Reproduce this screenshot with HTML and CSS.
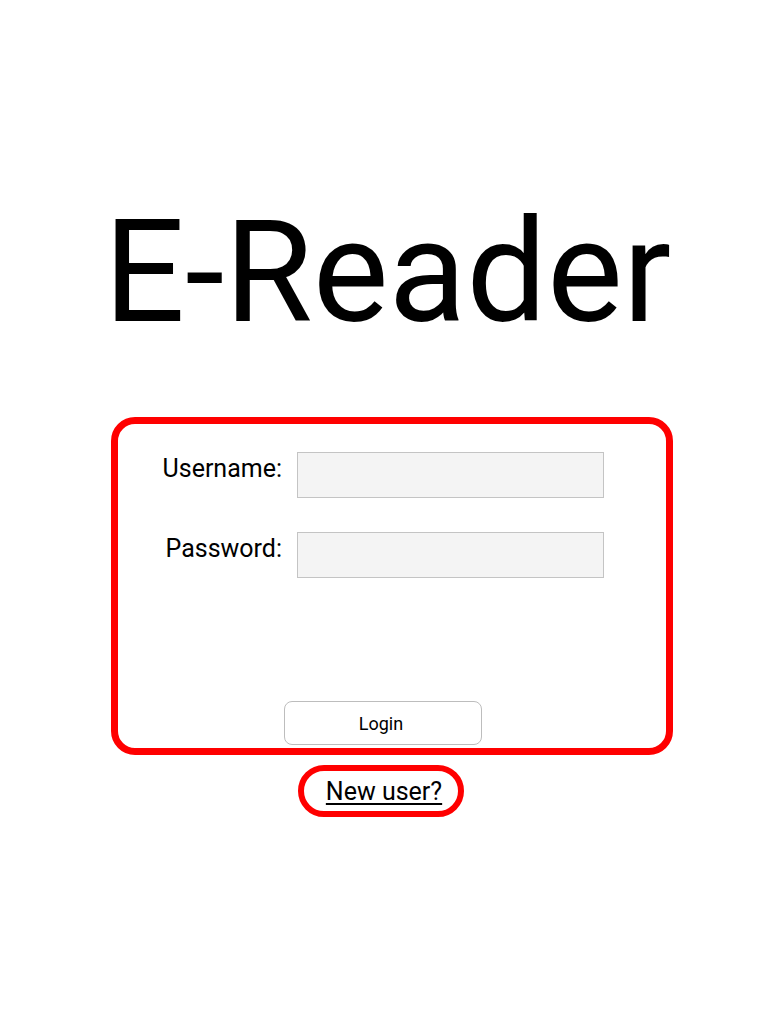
FILE: index.html
```html
<!DOCTYPE html>
<html>
<head>
<meta charset="utf-8">
<link rel="stylesheet" href="styles.css">
</head>
<body>
<main class="page">
  <h1 class="title">E-Reader</h1>
  <form class="login-box">
    <div class="row">
      <label class="label" for="u">Username:</label>
      <input class="field" id="u" type="text">
    </div>
    <div class="row">
      <label class="label" for="p">Password:</label>
      <input class="field" id="p" type="password">
    </div>
    <div class="actions">
      <button class="btn" type="button">Login</button>
    </div>
  </form>
  <div class="new-user-wrap">
    <a class="new-user" href="#">New user?</a>
  </div>
</main>
</body>
</html>
```
FILE: styles.css
```css
html, body {
  margin: 0;
  padding: 0;
  background: #ffffff;
}
body {
  font-family: Roboto, "Liberation Sans", sans-serif;
  color: #000;
}
.page {
  display: flex;
  flex-direction: column;
  align-items: stretch;
  width: 767px;
}
.title {
  margin: 0;
  padding-top: 188px;
  font-size: 143px;
  font-weight: 400;
  line-height: normal;
  text-align: center;
  transform: translateX(4px);
}
.login-box {
  box-sizing: border-box;
  margin: 61px 0 0 111px;
  width: 562px;
  height: 338px;
  border: 7px solid #ff0000;
  border-radius: 24px;
  padding-top: 28px;
  display: flex;
  flex-direction: column;
}
.row {
  display: flex;
  align-items: flex-start;
  height: 46px;
  margin-bottom: 34px;
}
.label {
  width: 164px;
  text-align: right;
  font-size: 25px;
  line-height: 29px;
  padding-top: 2px;
  padding-right: 15px;
  box-sizing: content-box;
}
.field {
  box-sizing: border-box;
  width: 307px;
  height: 46px;
  margin: 0;
  border: 1px solid #c4c4c4;
  background: #f4f4f4;
  font-family: inherit;
}
.actions {
  margin-top: auto;
  padding-bottom: 3px;
  display: flex;
  justify-content: flex-start;
  padding-left: 166px;
}
.btn {
  box-sizing: border-box;
  width: 198px;
  height: 44px;
  padding: 0 4px 0 0;
  border: 1px solid #bdbdbd;
  border-radius: 8px;
  background: #fff;
  font-family: Roboto, "Liberation Sans", sans-serif;
  font-size: 18px;
  color: #000;
}
.new-user-wrap {
  display: flex;
  margin-top: 10px;
  padding-left: 298px;
}
.new-user {
  box-sizing: border-box;
  display: flex;
  align-items: center;
  justify-content: center;
  width: 166px;
  height: 52px;
  padding-left: 6px;
  border: 6px solid #ff0000;
  border-radius: 26px;
  color: #000;
  font-size: 25px;
  text-decoration: underline;
  text-underline-offset: 3px;
}
```
